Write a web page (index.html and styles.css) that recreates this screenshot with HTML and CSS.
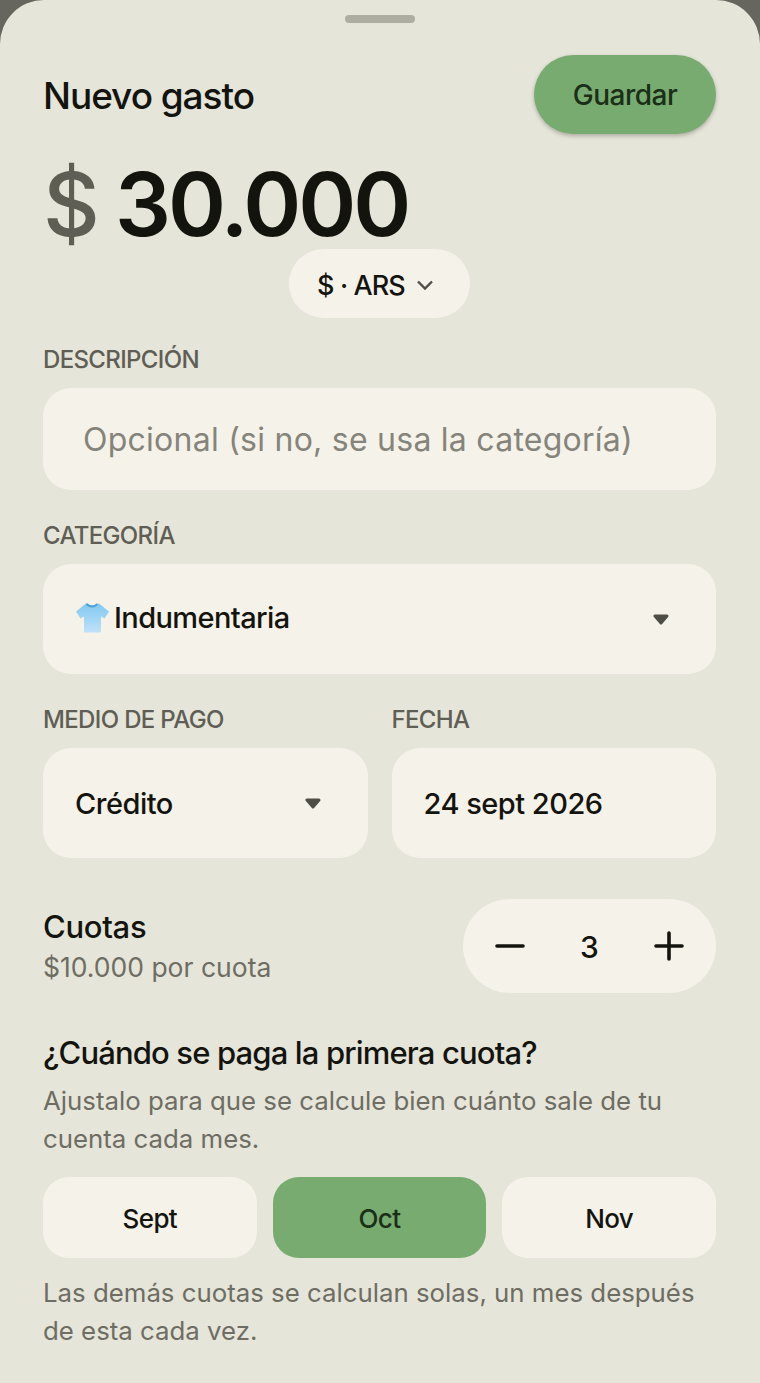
FILE: index.html
```html
<!DOCTYPE html>
<html lang="es">
<head>
  <meta charset="UTF-8" />
  <meta name="viewport" content="width=device-width, initial-scale=1.0"/>
  <title>Nuevo gasto</title>
  <link rel="stylesheet" href="styles.css">
</head>
<body>

<div class="sheet">
  <div class="handle"></div>

  <div class="header">
    <h1 class="title">Nuevo gasto</h1>
    <button class="save">Guardar</button>
  </div>

  <div class="amount"><span class="sign">$</span> 30.000</div>

  <div class="currency-row">
    <button class="currency">
      $ · ARS
      <svg class="chevron" width="18" height="18" viewBox="0 0 18 18"><path d="M2 5.500 9 12.500l7-7" fill="none" stroke="#4f4e46" stroke-width="2.400"/></svg>
    </button>
  </div>

  <div class="label label-first">DESCRIPCIÓN</div>
  <div class="field field-desc">Opcional (si no, se usa la categoría)</div>

  <div class="label">CATEGORÍA</div>
  <div class="field field-select">
    <span class="value">
      <svg class="shirt" width="34" height="32" viewBox="0 0 34 32">
        <defs>
          <linearGradient id="cloth" x1="0" y1="0" x2="0" y2="1">
            <stop offset="0" stop-color="#82c8f0"/>
            <stop offset="1" stop-color="#bfe1f9"/>
          </linearGradient>
        </defs>
        <path d="M11 1.500 1 9.500l4.500 7 3.500-2V29q0 1.500 1.500 1.500h14q1.500 0 1.500-1.500V14.500l3.500 2 4.500-7-10-8q-6 4-12 0Z" fill="url(#cloth)"/>
        <path d="M11.500 2q5.500 5 11 0" fill="none" stroke="#4f9fd6" stroke-width="2"/>
      </svg>
      Indumentaria
    </span>
    <svg class="caret" width="16" height="11" viewBox="0 0 16 11"><path d="M2 2h12L8 9Z" fill="#4f4e46" stroke="#4f4e46" stroke-width="3" stroke-linejoin="round"/></svg>
  </div>

  <div class="two-col">
    <div>
      <div class="label">MEDIO DE PAGO</div>
      <div class="field field-small">
        <span>Crédito</span>
        <svg class="caret" width="16" height="11" viewBox="0 0 16 11"><path d="M2 2h12L8 9Z" fill="#4f4e46" stroke="#4f4e46" stroke-width="3" stroke-linejoin="round"/></svg>
      </div>
    </div>
    <div>
      <div class="label">FECHA</div>
      <div class="field field-small">24 sept 2026</div>
    </div>
  </div>

  <div class="cuotas">
    <div>
      <div class="cuotas-title">Cuotas</div>
      <div class="cuotas-sub">$10.000 por cuota</div>
    </div>
    <div class="stepper">
      <svg width="30" height="30" viewBox="0 0 30 30"><path d="M2 15h26" stroke="#14140f" stroke-width="3.600" stroke-linecap="round"/></svg>
      <span class="count">3</span>
      <svg width="30" height="30" viewBox="0 0 30 30"><path d="M2 15h26M15 2v26" stroke="#14140f" stroke-width="3.600" stroke-linecap="round"/></svg>
    </div>
  </div>

  <h2 class="question">¿Cuándo se paga la primera cuota?</h2>
  <p class="hint">Ajustalo para que se calcule bien cuánto sale de tu cuenta cada mes.</p>

  <div class="months">
    <button class="month">Sept</button>
    <button class="month active">Oct</button>
    <button class="month">Nov</button>
  </div>

  <p class="hint hint-last">Las demás cuotas se calculan solas, un mes después de esta cada vez.</p>
</div>

</body>
</html>
```

FILE: styles.css
```css
* {
  box-sizing: border-box;
}

html, body {
  margin: 0;
  height: 100%;
}

body {
  background: #66655e;
  font-family: Inter, "Noto Sans", sans-serif;
  color: #14140f;
  overflow: hidden;
}

.sheet {
  background: #e6e5d9;
  border-radius: 44px 44px 0 0;
  height: 1383px;
  padding: 15px 44px 0 43px;
}

.handle {
  width: 70px;
  height: 8px;
  margin: 0 auto;
  background: #aeada1;
  border-radius: 4px;
}

.header {
  display: flex;
  justify-content: space-between;
  align-items: center;
  margin-top: 32px;
}

.title {
  margin: 2px 0 0;
  font-size: 37px;
  font-weight: 500;
  letter-spacing: -1.050px;
}

.save {
  width: 182px;
  height: 79px;
  border: none;
  border-radius: 40px;
  background: #78ab70;
  color: #1a2e18;
  font: 500 28px Inter, sans-serif;
  letter-spacing: -0.5px;
  box-shadow: 0 2px 4px rgba(0, 0, 0, 0.25);
}

.amount {
  margin-top: 17px;
  height: 98px;
  font-size: 88px;
  line-height: 106px;
  font-weight: 600;
  letter-spacing: -3px;
  word-spacing: -1px;
}

.amount .sign {
  color: #5f5e55;
  font-weight: 500;
}

.currency-row {
  display: flex;
  justify-content: center;
}

.currency {
  display: flex;
  align-items: center;
  gap: 11px;
  height: 69px;
  width: 181px;
  padding: 3px 8px 0 0;
  justify-content: center;
  border: none;
  border-radius: 35px;
  background: #f5f2ea;
  color: #14140f;
  font: 500 27px Inter, sans-serif;
  letter-spacing: -0.9px;
}

.label {
  font-size: 24px;
  line-height: 30px;
  font-weight: 500;
  color: #5f5e55;
  letter-spacing: -0.65px;
  margin: 31px 0 13px;
}

.label-first {
  margin-top: 27px;
}

.field {
  background: #f5f2ea;
  border-radius: 28px;
  display: flex;
  align-items: center;
  font-size: 29px;
  font-weight: 500;
  letter-spacing: -0.5px;
}

.field-desc {
  height: 102px;
  padding-left: 40px;
  color: #85847a;
  font-weight: 400;
  font-size: 32px;
  letter-spacing: 0.25px;
}

.field-select {
  height: 110px;
  padding: 0 47px 0 32px;
  justify-content: space-between;
  letter-spacing: -0.6px;
}

.field-select .value {
  margin-top: -3px;
}

.field-small {
  height: 110px;
  padding: 0 47px 0 32px;
  justify-content: space-between;
}

.value {
  display: flex;
  align-items: center;
  gap: 5px;
}

.two-col {
  display: grid;
  grid-template-columns: 1fr 1fr;
  gap: 24px;
}

.cuotas {
  display: flex;
  justify-content: space-between;
  align-items: center;
  margin-top: 41px;
}

.cuotas-title {
  font-size: 31px;
  font-weight: 500;
  letter-spacing: -0.3px;
  margin-top: -2px;
}

.cuotas-sub {
  margin-top: 6px;
  font-size: 26.500px;
  color: #6e6d63;
}

.stepper {
  display: flex;
  justify-content: space-between;
  align-items: center;
  width: 253px;
  height: 94px;
  padding: 0 32px;
  background: #f5f2ea;
  border-radius: 47px;
}

.count {
  font-size: 30px;
  font-weight: 500;
  padding-top: 2px;
}

.question {
  margin: 41px 0 0;
  font-size: 31px;
  font-weight: 500;
  letter-spacing: -0.85px;
}

.hint {
  margin: 11px 0 0;
  font-size: 25.800px;
  line-height: 38px;
  color: #6e6d63;
}

.months {
  display: grid;
  grid-template-columns: repeat(3, 1fr);
  gap: 16px;
  margin-top: 19px;
}

.month {
  height: 81px;
  padding: 2px 0 0;
  border: none;
  border-radius: 26px;
  background: #f5f2ea;
  color: #14140f;
  font: 500 26px Inter, sans-serif;
  letter-spacing: -0.6px;
}

.month.active {
  background: #78ab70;
  color: #1a2e18;
}

.hint-last {
  margin-top: 16px;
}
```
